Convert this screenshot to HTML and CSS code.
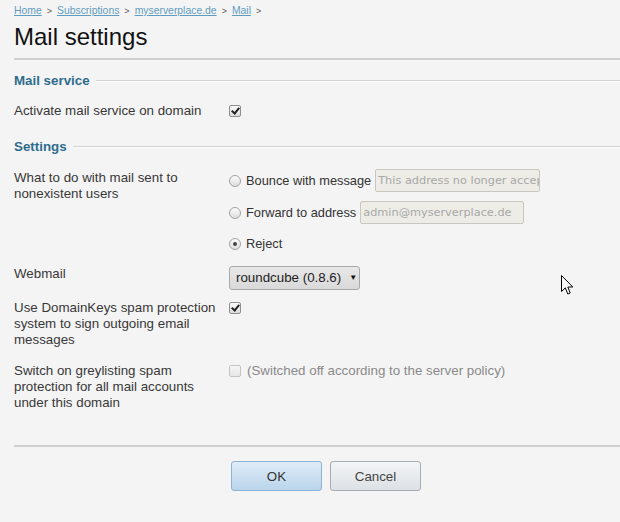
FILE: index.html
```html
<!DOCTYPE html>
<html>
<head>
<meta charset="utf-8">
<link rel="stylesheet" href="styles.css">
</head>
<body>
<div class="page">
  <div class="crumbs">
    <a href="#">Home</a><span class="sep">&gt;</span><a href="#">Subscriptions</a><span class="sep">&gt;</span><a href="#">myserverplace.de</a><span class="sep">&gt;</span><a href="#">Mail</a><span class="sep">&gt;</span>
  </div>
  <h1 class="title">Mail settings</h1>

  <div class="section section-first">
    <h2 class="section-head"><span>Mail service</span></h2>
    <div class="row row-activate">
      <div class="label">Activate mail service on domain</div>
      <div class="field"><span class="cb checked"></span></div>
    </div>
  </div>

  <div class="section section-second">
    <h2 class="section-head"><span>Settings</span></h2>
    <div class="row row-nonexist">
      <div class="label">What to do with mail sent to<br>nonexistent users</div>
      <div class="field options">
        <div class="opt"><span class="rb"></span><span class="opt-text">Bounce with message</span><span class="txt txt-bounce">This address no longer accepts mail.</span></div>
        <div class="opt"><span class="rb"></span><span class="opt-text">Forward to address</span><span class="txt txt-forward">admin@myserverplace.de</span></div>
        <div class="opt opt-reject"><span class="rb checked"></span><span class="opt-text">Reject</span></div>
      </div>
    </div>
    <div class="row row-webmail">
      <div class="label">Webmail</div>
      <div class="field"><span class="select">roundcube (0.8.6)<span class="arrow">&#9660;</span></span></div>
    </div>
    <div class="row row-dk">
      <div class="label">Use DomainKeys spam protection<br>system to sign outgoing email<br>messages</div>
      <div class="field field-cb"><span class="cb checked"></span></div>
    </div>
    <div class="row row-grey">
      <div class="label">Switch on greylisting spam<br>protection for all mail accounts<br>under this domain</div>
      <div class="field field-cb"><span class="cb disabled"></span><span class="note">(Switched off according to the server policy)</span></div>
    </div>
  </div>

  <div class="buttons">
    <button class="btn btn-ok">OK</button>
    <button class="btn btn-cancel">Cancel</button>
  </div>
</div>
<svg class="cursor" width="13" height="21" viewBox="0 0 13 21"><path d="M0.5 0.5 L0.5 16.5 L4.3 12.8 L6.8 19 L9.2 18 L6.8 12 L11.8 12 Z" fill="#fff" stroke="#000" stroke-width="1" stroke-linejoin="miter"/></svg>
</body>
</html>
```
FILE: styles.css
```css
html, body {
  margin: 0;
  padding: 0;
  background: #f4f4f4;
}
body {
  font-family: "Liberation Sans", Arial, sans-serif;
  font-size: 13.33px;
  color: #383838;
  position: relative;
  width: 620px;
  height: 522px;
  overflow: hidden;
}
.page {
  padding-left: 14px;
}
.crumbs {
  height: 22px;
  line-height: 22px;
  font-size: 10.4px;
  color: #555;
}
.crumbs a {
  color: #5f9cc0;
  text-decoration: underline;
}
.crumbs .sep {
  display: inline-block;
  margin: 0 5px;
  font-size: 9px;
  color: #555;
}
.title {
  margin: 0;
  font-family: "Liberation Sans", Arial, sans-serif;
  font-weight: normal;
  font-size: 24px;
  line-height: 30px;
  color: #111;
  padding-bottom: 6px;
  border-bottom: 2px solid #d0d0d0;
}
.section-head {
  display: flex;
  align-items: center;
  margin: 0;
  font-size: 13.33px;
  line-height: 16px;
  font-weight: bold;
  color: #2e6c8e;
}
.section-head::after {
  content: "";
  flex: 1;
  height: 1px;
  margin-left: 6px;
  background: #d4d4d4;
  border-bottom: 1px solid #fbfbfb;
}
.section-first .section-head { margin-top: 13px; }
.section-second .section-head { margin-top: 20px; }
.row {
  display: grid;
  grid-template-columns: 215px 1fr;
  line-height: 16px;
}
.row-activate { margin-top: 14px; }
.row-nonexist { margin-top: 15px; }
.row-webmail { margin-top: 11px; }
.row-dk { margin-top: 10px; }
.row-grey { margin-top: 15px; }
.field {
  display: flex;
  align-items: center;
}
.field-cb {
  align-items: flex-start;
  padding-top: 2px;
}
.cb {
  display: inline-block;
  position: relative;
  box-sizing: border-box;
  width: 12px;
  height: 12px;
  border: 1px solid #8e8e8e;
  border-radius: 2px;
  background: linear-gradient(#fafafa, #dcdcdc);
  flex: none;
}
.cb.checked::after {
  content: "";
  position: absolute;
  left: 3px;
  top: 0px;
  width: 3px;
  height: 6px;
  border: solid #222;
  border-width: 0 2px 2px 0;
  transform: rotate(40deg);
}
.cb.disabled {
  border-color: #c4c4c4;
  background: linear-gradient(#f6f6f6, #e6e6e6);
}
.note {
  margin-left: 6px;
  color: #8a8a8a;
  line-height: 12px;
}
.options {
  flex-direction: column;
  align-items: flex-start;
  gap: 9px;
  margin-top: -1px;
}
.opt {
  display: flex;
  align-items: center;
  height: 23px;
}
.opt-reject { height: 22px; }
.rb {
  display: inline-block;
  position: relative;
  box-sizing: border-box;
  width: 12px;
  height: 12px;
  border: 1px solid #a2a2a2;
  border-radius: 50%;
  background: linear-gradient(#fbfbfb, #dedede);
  flex: none;
}
.rb.checked::after {
  content: "";
  position: absolute;
  left: 3px;
  top: 3px;
  width: 4px;
  height: 4px;
  border-radius: 50%;
  background: #444;
}
.opt-text {
  margin-left: 5px;
  font-size: 12.8px;
  color: #333;
}
.txt {
  box-sizing: border-box;
  margin-left: 4px;
  height: 23px;
  line-height: 21px;
  padding: 0 2px;
  border: 1px solid #c9c8c0;
  border-radius: 2px;
  background: #edece6;
  color: #a8a8a8;
  font-family: "DejaVu Sans", sans-serif;
  font-size: 11.3px;
  white-space: nowrap;
  overflow: hidden;
}
.txt-bounce { width: 165px; }
.txt-forward { width: 164px; }
.select {
  box-sizing: border-box;
  display: inline-flex;
  align-items: center;
  width: 131px;
  height: 24px;
  padding-left: 6px;
  border: 1px solid #a9a9a9;
  border-radius: 3px;
  background: linear-gradient(#e8e8e8, #d9d9d9);
  color: #222;
}
.select .arrow {
  margin-left: 8px;
  font-size: 8px;
  color: #111;
}
.buttons {
  margin-top: 34px;
  border-top: 2px solid #d0d0d0;
  padding-top: 14px;
  padding-left: 217px;
  display: flex;
  gap: 8px;
}
.btn {
  box-sizing: border-box;
  width: 91px;
  height: 30px;
  border-radius: 3px;
  font-family: "Liberation Sans", Arial, sans-serif;
  font-size: 13.33px;
  color: #333;
  padding: 0;
}
.btn-ok {
  border: 1px solid #8db3d8;
  background: linear-gradient(#deebf6, #bad5ec);
}
.btn-cancel {
  border: 1px solid #a8adb2;
  background: linear-gradient(#f3f5f7, #dce1e5);
  color: #444;
}
.cursor {
  position: absolute;
  left: 561px;
  top: 275px;
}
```
